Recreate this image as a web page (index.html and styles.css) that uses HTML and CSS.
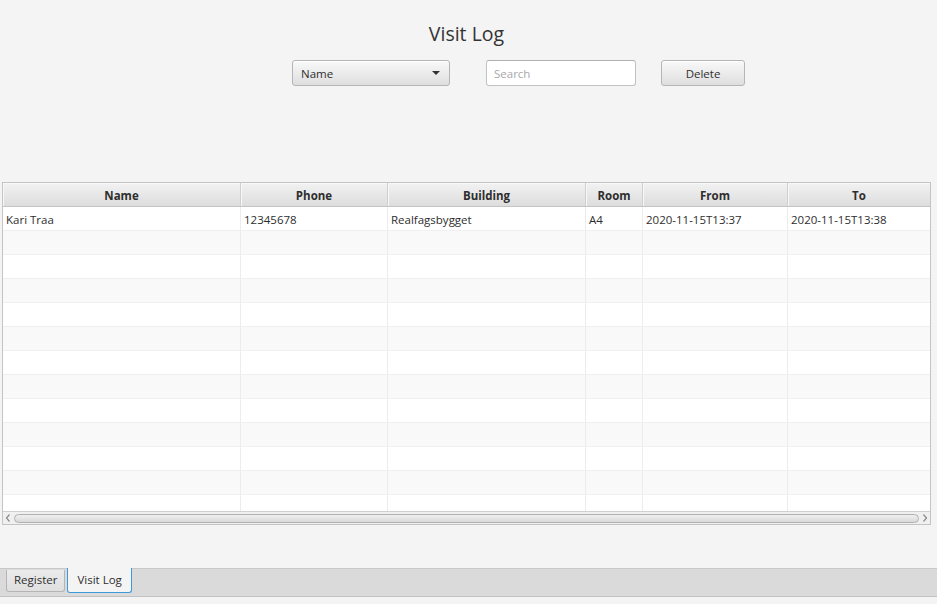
FILE: index.html
```html
<!DOCTYPE html>
<html>
<head>
<meta charset="utf-8">
<link rel="stylesheet" href="styles.css">
</head>
<body>
<div class="app">
  <main class="content">
    <h1 class="title">Visit Log</h1>
    <div class="controls">
      <div class="combo"><span>Name</span><span class="arrow"></span></div>
      <div class="search"><span class="placeholder">Search</span></div>
      <div class="btn">Delete</div>
    </div>
    <div class="table">
      <div class="row head">
        <div class="cell">Name</div>
        <div class="cell">Phone</div>
        <div class="cell">Building</div>
        <div class="cell">Room</div>
        <div class="cell">From</div>
        <div class="cell">To</div>
      </div>
      <div class="body">
        <div class="row">
          <div class="cell">Kari Traa</div>
          <div class="cell">12345678</div>
          <div class="cell">Realfagsbygget</div>
          <div class="cell">A4</div>
          <div class="cell">2020-11-15T13:37</div>
          <div class="cell">2020-11-15T13:38</div>
        </div>
        <div class="row odd"><div class="cell"></div><div class="cell"></div><div class="cell"></div><div class="cell"></div><div class="cell"></div><div class="cell"></div></div>
        <div class="row"><div class="cell"></div><div class="cell"></div><div class="cell"></div><div class="cell"></div><div class="cell"></div><div class="cell"></div></div>
        <div class="row odd"><div class="cell"></div><div class="cell"></div><div class="cell"></div><div class="cell"></div><div class="cell"></div><div class="cell"></div></div>
        <div class="row"><div class="cell"></div><div class="cell"></div><div class="cell"></div><div class="cell"></div><div class="cell"></div><div class="cell"></div></div>
        <div class="row odd"><div class="cell"></div><div class="cell"></div><div class="cell"></div><div class="cell"></div><div class="cell"></div><div class="cell"></div></div>
        <div class="row"><div class="cell"></div><div class="cell"></div><div class="cell"></div><div class="cell"></div><div class="cell"></div><div class="cell"></div></div>
        <div class="row odd"><div class="cell"></div><div class="cell"></div><div class="cell"></div><div class="cell"></div><div class="cell"></div><div class="cell"></div></div>
        <div class="row"><div class="cell"></div><div class="cell"></div><div class="cell"></div><div class="cell"></div><div class="cell"></div><div class="cell"></div></div>
        <div class="row odd"><div class="cell"></div><div class="cell"></div><div class="cell"></div><div class="cell"></div><div class="cell"></div><div class="cell"></div></div>
        <div class="row"><div class="cell"></div><div class="cell"></div><div class="cell"></div><div class="cell"></div><div class="cell"></div><div class="cell"></div></div>
        <div class="row odd"><div class="cell"></div><div class="cell"></div><div class="cell"></div><div class="cell"></div><div class="cell"></div><div class="cell"></div></div>
        <div class="row"><div class="cell"></div><div class="cell"></div><div class="cell"></div><div class="cell"></div><div class="cell"></div><div class="cell"></div></div>
      </div>
      <div class="hscroll">
        <svg class="sarrow" width="8" height="12" viewBox="0 0 8 12"><path d="M5.5 2.5 L2.5 6 L5.5 9.5" fill="none" stroke="#8a8a8a" stroke-width="1.2"/></svg>
        <div class="thumb"></div>
        <svg class="sarrow" width="8" height="12" viewBox="0 0 8 12"><path d="M2.5 2.5 L5.5 6 L2.5 9.5" fill="none" stroke="#8a8a8a" stroke-width="1.2"/></svg>
      </div>
    </div>
  </main>
  <nav class="tabbar">
    <div class="tab">Register</div>
    <div class="tab selected">Visit Log</div>
  </nav>
</div>
</body>
</html>
```
FILE: styles.css
```css
html, body {
  margin: 0;
  padding: 0;
  background: #f4f4f4;
}
body {
  font-family: "Open Sans", "Noto Sans", sans-serif;
  font-size: 11.5px;
  color: #2e2e2e;
}
.app {
  width: 937px;
  height: 597px;
  display: flex;
  flex-direction: column;
}
.content {
  flex: 1;
  display: flex;
  flex-direction: column;
  padding: 0 6px 0 2px;
}
.title {
  margin: 22px 0 0;
  font-size: 19.5px;
  font-weight: normal;
  line-height: 24px;
  height: 24px;
  text-align: center;
  color: #333;
}
.controls {
  margin-top: 14px;
  height: 26px;
  display: flex;
  padding-left: 290px;
}
.combo {
  box-sizing: border-box;
  width: 158px;
  height: 26px;
  border: 1px solid #b5b5b5;
  border-radius: 3px;
  background: linear-gradient(#f9f9f9, #dedede);
  display: flex;
  align-items: center;
  justify-content: space-between;
  padding: 0 8px 0 8px;
  box-shadow: inset 0 1px 0 #fff;
}
.arrow {
  width: 0;
  height: 0;
  border-left: 4px solid transparent;
  border-right: 4px solid transparent;
  border-top: 4px solid #333;
  margin-right: 1px;
}
.search {
  box-sizing: border-box;
  margin-left: 36px;
  width: 150px;
  height: 26px;
  background: #fff;
  border: 1px solid #c2c2c2;
  border-top-color: #b0b0b0;
  border-radius: 3px;
  display: flex;
  align-items: center;
  padding-left: 7px;
}
.placeholder { color: #a8a8a8; }
.btn {
  box-sizing: border-box;
  margin-left: 25px;
  width: 84px;
  height: 26px;
  border: 1px solid #b5b5b5;
  border-radius: 3px;
  background: linear-gradient(#f9f9f9, #dedede);
  box-shadow: inset 0 1px 0 #fff;
  display: flex;
  align-items: center;
  justify-content: center;
}
.table {
  margin-top: 96px;
  width: 929px;
  box-sizing: border-box;
  border: 1px solid #c4c4c4;
  background: #fff;
  display: flex;
  flex-direction: column;
}
.row {
  display: grid;
  grid-template-columns: 238px 147px 198px 57px 145px 142px;
  height: 24px;
  background: #fff;
}
.row.odd { background: #f9f9f9; }
.cell {
  box-sizing: border-box;
  border-right: 1px solid #ececec;
  padding: 1px 3px 0;
  line-height: 23px;
  white-space: nowrap;
  overflow: hidden;
}
.cell:last-child { border-right: none; }
.row.head {
  background: linear-gradient(#f2f2f2, #dddddd);
  border-bottom: 1px solid #c4c4c4;
  height: 24px;
  box-sizing: border-box;
}
.row.head .cell {
  border-right: 1px solid #cfcfcf;
  font-weight: bold;
  text-align: center;
  line-height: 23px;
  box-shadow: inset 1px 1px 0 #f8f8f8;
}
.row.head .cell:last-child { border-right: none; }
.body {
  height: 304px;
  overflow: hidden;
}
.body .row { border-bottom: 1px solid #f0f0f0; box-sizing: border-box; }
.hscroll {
  height: 12px;
  border-top: 1px solid #d0d0d0;
  background: #f0f0f0;
  display: flex;
  align-items: center;
  padding: 0 1px 0 1px;
  gap: 2px;
}
.sarrow { flex: none; }
.thumb {
  flex: 1;
  height: 9px;
  box-sizing: border-box;
  border: 1px solid #b0b0b0;
  border-radius: 5px;
  background: linear-gradient(#f0f0f0, #d9d9d9);
}
.tabbar {
  height: 29px;
  box-sizing: border-box;
  background: #dadada;
  border-top: 1px solid #c8c8c8;
  border-bottom: 1px solid #c2c2c2;
  display: flex;
  align-items: flex-start;
  padding-left: 6px;
  gap: 2px;
}
.tab {
  box-sizing: border-box;
  height: 22px;
  margin-top: 1px;
  padding: 0 7px;
  border: 1px solid #b5b5b5;
  border-top: none;
  border-radius: 0 0 3px 3px;
  background: linear-gradient(#ebebeb, #dfdfdf);
  line-height: 20px;
}
.tab.selected {
  margin-top: -1px;
  height: 25px;
  padding: 0 9px;
  background: #f4f4f4;
  border-color: #3b9bd6;
  line-height: 23px;
}
```
